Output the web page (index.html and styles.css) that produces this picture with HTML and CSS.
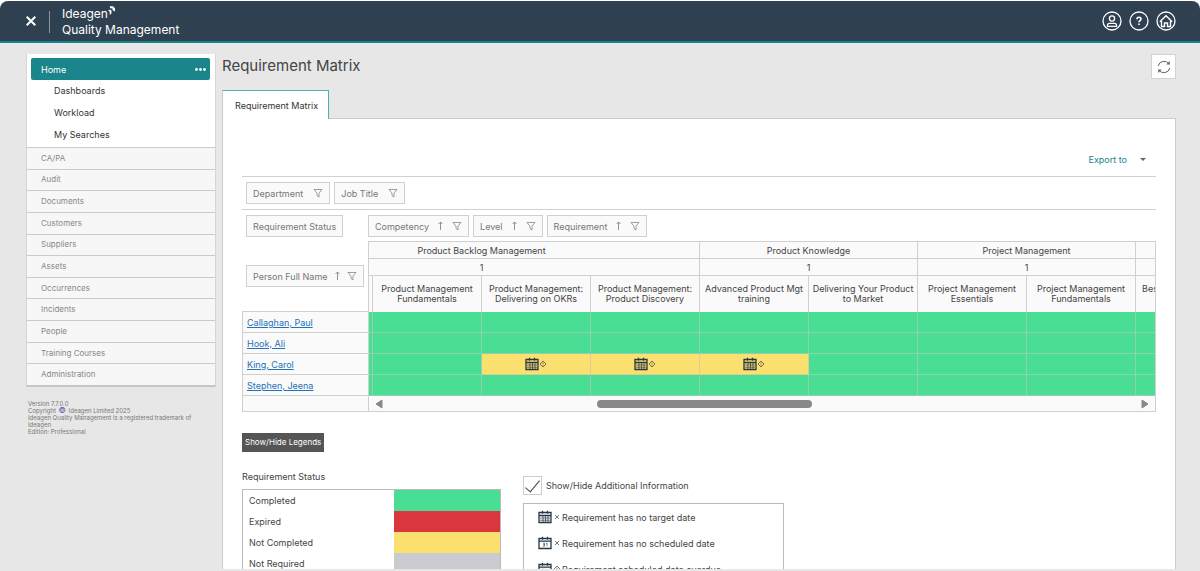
FILE: index.html
```
<!DOCTYPE html>
<html lang="en">

<head>
    <meta charset="UTF-8">
    <meta name="viewport" content="width=device-width, initial-scale=1.0">
    <title>Requirement Matrix</title>
    <link rel="stylesheet" href="styles.css">
</head>

<body>
    <!-- Shared icons -->
    <svg class="sprite" aria-hidden="true">
        <symbol id="filter" viewBox="0 0 10 10">
            <path d="M1 1.5h8L6 5.2V9L4 7.6V5.2z" fill="none" stroke="currentColor" stroke-width="0.7" />
        </symbol>
        <symbol id="sort" viewBox="0 0 8 10">
            <path d="M4 9V1M2 3l2-2 2 2" fill="none" stroke="currentColor" stroke-width="0.8" />
        </symbol>
        <symbol id="calendar" viewBox="0 0 14 14">
            <path d="M1 2.500h12v10H1zM1 5.500h12M4.500 0.800v3M9.500 0.800v3" fill="none" stroke="currentColor" stroke-width="1.300" />
            <path d="M2 8h10M2 10.200h10M5 6v6M7.500 6v6M10 6v6" fill="none" stroke="currentColor" stroke-width="0.700" />
        </symbol>
        <symbol id="calendar-day" viewBox="0 0 14 14">
            <path d="M1 2.500h12v10H1zM1 5.200h12M4.500 0.800v3M9.500 0.800v3" fill="none" stroke="currentColor" stroke-width="1.300" />
            <path d="M4.800 7.200h1.700v3H4.800M5 8.700h1.500M8 7.600l1-.5v3.200" fill="none" stroke="currentColor" stroke-width="0.600" />
        </symbol>
        <symbol id="overdue" viewBox="0 0 8 8">
            <path d="M4 1l3 3-3 3-3-3z" fill="none" stroke="currentColor" stroke-width="0.8" />
            <path d="M4 2.6v1.8M4 5v.6" stroke="currentColor" stroke-width="0.8" />
        </symbol>
        <symbol id="missing" viewBox="0 0 8 8">
            <path d="M2 2l4 4M6 2L2 6" stroke="currentColor" stroke-width="0.8" />
        </symbol>
    </svg>

    <header class="topbar">
        <button class="close-button" type="button" aria-label="Close menu">
            <svg viewBox="0 0 10 10"><path d="M.7.7l8.600 8.600M9.300.7L.7 9.300" stroke="currentColor" stroke-width="2" /></svg>
        </button>
        <div class="brand">
            <div class="brand-name">Ideagen
                <svg class="brand-mark" viewBox="0 0 8 10">
                    <path d="M2 0h3.500L8 2.500V6L5.200 4.800V2.800L2.500 2.300zM0 4.500L2.800 4l1.200 1.200V8L2 10V6.500z" fill="currentColor" />
                </svg>
            </div>
            <div>Quality Management</div>
        </div>
        <nav class="top-links">
            <a href="#" aria-label="Profile">
                <svg viewBox="0 0 20 20" fill="none" stroke="currentColor" stroke-width="1.300">
                    <circle cx="10" cy="10" r="9" />
                    <circle cx="10" cy="7.500" r="2.600" />
                    <path d="M5.500 15.300v-1q0-2 2-2h5q2 0 2 2v1z" />
                </svg>
            </a>
            <a href="#" aria-label="Help">
                <svg viewBox="0 0 20 20" fill="none" stroke="currentColor" stroke-width="1.300">
                    <circle cx="10" cy="10" r="9" />
                    <path d="M8 8.200q0-2 2-2t2 1.800q0 1-1 1.700t-1 1.500M10 12.500v1.600" stroke-width="1.600" />
                </svg>
            </a>
            <a href="#" aria-label="Home">
                <svg viewBox="0 0 20 20" fill="none" stroke="currentColor" stroke-width="1.300">
                    <circle cx="10" cy="10" r="9" />
                    <path d="M3.800 10.800L10 4.800l6.200 6M5.500 10v5.500h3v-3.500h3v3.500h3V10" stroke-width="1.400" />
                </svg>
            </a>
        </nav>
    </header>

    <div class="layout">
        <aside class="sidebar">
            <nav class="menu">
                <div class="menu-open">
                    <a class="menu-active" href="#">Home
                        <svg viewBox="0 0 11 3" fill="currentColor">
                            <circle cx="1.500" cy="1.500" r="1.400" />
                            <circle cx="5.500" cy="1.500" r="1.400" />
                            <circle cx="9.500" cy="1.500" r="1.400" />
                        </svg>
                    </a>
                    <a class="menu-sub" href="#">Dashboards</a>
                    <a class="menu-sub" href="#">Workload</a>
                    <a class="menu-sub" href="#">My Searches</a>
                </div>
                <div class="menu-list">
                    <a class="menu-item" href="#">CA/PA</a>
                    <a class="menu-item" href="#">Audit</a>
                    <a class="menu-item" href="#">Documents</a>
                    <a class="menu-item" href="#">Customers</a>
                    <a class="menu-item" href="#">Suppliers</a>
                    <a class="menu-item" href="#">Assets</a>
                    <a class="menu-item" href="#">Occurrences</a>
                    <a class="menu-item" href="#">Incidents</a>
                    <a class="menu-item" href="#">People</a>
                    <a class="menu-item" href="#">Training Courses</a>
                    <a class="menu-item" href="#">Administration</a>
                </div>
            </nav>
            <div class="version">
                Version 7.7.0.0<br>
                Copyright <span class="copy">©</span> Ideagen Limited 2025<br>
                Ideagen Quality Management is a registered trademark of Ideagen<br>
                Edition: Professional
            </div>
        </aside>

        <main class="content">
            <div class="title-row">
                <h1>Requirement Matrix</h1>
                <button class="refresh-button" type="button" aria-label="Refresh">
                    <svg viewBox="0 0 14 14" fill="none" stroke="currentColor" stroke-width="1">
                        <path d="M1.200 6A6 6 0 0 1 12.200 4.200M12.800 8A6 6 0 0 1 1.800 9.800" />
                        <path d="M12.800 1v3.600H9.200zM1.200 13V9.400h3.600z" fill="currentColor" stroke="none" />
                    </svg>
                </button>
            </div>
            <div class="tabs">
                <a class="tab" href="#">Requirement Matrix</a>
            </div>

            <section class="panel">
                <div class="export-row">
                    <button class="export-button" type="button">Export to <span class="caret"></span></button>
                </div>

                <div class="filter-fields">
                    <button class="field" type="button">Department <svg class="filter"><use href="#filter" /></svg></button>
                    <button class="field" type="button">Job Title <svg class="filter"><use href="#filter" /></svg></button>
                </div>

                <div class="pivot">
                    <div class="data-fields">
                        <button class="field" type="button">Requirement Status</button>
                    </div>
                    <div class="column-fields">
                        <button class="field" type="button">Competency <svg class="sort"><use href="#sort" /></svg><svg class="filter"><use href="#filter" /></svg></button>
                        <button class="field" type="button">Level <svg class="sort"><use href="#sort" /></svg><svg class="filter"><use href="#filter" /></svg></button>
                        <button class="field" type="button">Requirement <svg class="sort"><use href="#sort" /></svg><svg class="filter"><use href="#filter" /></svg></button>
                    </div>

                    <div class="row-side">
                        <div class="row-fields">
                            <button class="field" type="button">Person Full Name <svg class="sort"><use href="#sort" /></svg><svg class="filter"><use href="#filter" /></svg></button>
                        </div>
                        <ul class="people">
                            <li><a href="#">Callaghan, Paul</a></li>
                            <li><a href="#">Hook, Ali</a></li>
                            <li><a href="#">King, Carol</a></li>
                            <li><a href="#">Stephen, Jeena</a></li>
                            <li class="people-end"></li>
                        </ul>
                    </div>

                    <div class="data-side">
                        <div class="viewport">
                            <table class="matrix">
                                <thead>
                                    <tr class="group">
                                        <th colspan="4">Product Backlog Management</th>
                                        <th colspan="2">Product Knowledge</th>
                                        <th colspan="2">Project Management</th>
                                        <th></th>
                                    </tr>
                                    <tr class="group">
                                        <th colspan="4">1</th>
                                        <th colspan="2">1</th>
                                        <th colspan="2">1</th>
                                        <th></th>
                                    </tr>
                                    <tr class="names">
                                        <th></th>
                                        <th>Product Management Fundamentals</th>
                                        <th>Product Management: Delivering on OKRs</th>
                                        <th>Product Management: Product Discovery</th>
                                        <th>Advanced Product Mgt training</th>
                                        <th>Delivering Your Product to Market</th>
                                        <th>Project Management Essentials</th>
                                        <th>Project Management Fundamentals</th>
                                        <th class="cut">Bes</th>
                                    </tr>
                                </thead>
                                <tbody>
                                    <tr><td></td><td></td><td></td><td></td><td></td><td></td><td></td><td></td><td></td></tr>
                                    <tr><td></td><td></td><td></td><td></td><td></td><td></td><td></td><td></td><td></td></tr>
                                    <tr>
                                        <td></td>
                                        <td></td>
                                        <td class="pending"><svg class="calendar"><use href="#calendar" /></svg><svg class="mark"><use href="#overdue" /></svg></td>
                                        <td class="pending"><svg class="calendar"><use href="#calendar" /></svg><svg class="mark"><use href="#overdue" /></svg></td>
                                        <td class="pending"><svg class="calendar"><use href="#calendar" /></svg><svg class="mark"><use href="#overdue" /></svg></td>
                                        <td></td>
                                        <td></td>
                                        <td></td>
                                        <td></td>
                                    </tr>
                                    <tr><td></td><td></td><td></td><td></td><td></td><td></td><td></td><td></td><td></td></tr>
                                </tbody>
                            </table>
                        </div>
                        <div class="scrollbar">
                            <svg viewBox="0 0 8 10"><path d="M7 1v8L1 5z" fill="currentColor" stroke="currentColor" stroke-linejoin="round" /></svg>
                            <div class="track"><div class="thumb"></div></div>
                            <svg viewBox="0 0 8 10"><path d="M1 1v8l6-4z" fill="currentColor" stroke="currentColor" stroke-linejoin="round" /></svg>
                        </div>
                    </div>
                </div>

                <button class="legend-button" type="button">Show/Hide Legends</button>

                <div class="legends">
                    <div class="status-legend">
                        <h2>Requirement Status</h2>
                        <table>
                            <tr><td>Completed</td><td class="completed"></td></tr>
                            <tr><td>Expired</td><td class="expired"></td></tr>
                            <tr><td>Not Completed</td><td class="not-completed"></td></tr>
                            <tr><td>Not Required</td><td class="not-required"></td></tr>
                        </table>
                    </div>
                    <div class="info-legend">
                        <label class="info-toggle"><input type="checkbox" checked> Show/Hide Additional Information</label>
                        <ul>
                            <li><svg class="calendar"><use href="#calendar" /></svg><svg class="mark"><use href="#missing" /></svg>Requirement has no target date</li>
                            <li><svg class="calendar"><use href="#calendar-day" /></svg><svg class="mark"><use href="#missing" /></svg>Requirement has no scheduled date</li>
                            <li><svg class="calendar"><use href="#calendar-day" /></svg><svg class="mark"><use href="#overdue" /></svg>Requirement scheduled date overdue</li>
                        </ul>
                    </div>
                </div>
            </section>
        </main>
    </div>
</body>

</html>
```
FILE: styles.css
```
* {
    box-sizing: border-box;
}

body {
    display: flex;
    flex-direction: column;
    height: 100vh;
    margin: 0;
    padding-top: 1px;
    overflow: hidden;
    background: #fff;
    color: #444;
    font-family: Inter, "Liberation Sans", sans-serif;
    font-size: 9px;
    line-height: 11px;
}

a {
    color: inherit;
    text-decoration: none;
}

button {
    padding: 0;
    border: 0;
    background: none;
    color: inherit;
    font: inherit;
    cursor: pointer;
}

ul {
    margin: 0;
    padding: 0;
    list-style: none;
}

svg {
    display: block;
    flex: none;
}

.sprite {
    position: absolute;
    width: 0;
    height: 0;
}

/* Header */
.topbar {
    display: flex;
    flex: none;
    align-items: center;
    height: 42px;
    padding: 0 24px;
    border-bottom: 2px solid #16858b;
    border-radius: 8px 8px 0 0;
    background: #2f4151;
    color: #fff;
}

.close-button {
    width: 26px;
    padding-left: 2px;
}

.close-button svg {
    width: 10px;
    height: 10px;
}

.brand {
    position: relative;
    padding-top: 1px;
    padding-left: 12px;
    font-size: 12px;
    line-height: 16px;
}

.brand::before {
    content: "";
    position: absolute;
    top: 6px;
    bottom: 5px;
    left: -1px;
    border-left: 1px solid #8b96a0;
}

.brand-name {
    display: flex;
    align-items: flex-start;
}

.brand-mark {
    width: 7px;
    height: 9px;
}

.top-links {
    display: flex;
    gap: 7px;
    margin-left: auto;
}

.top-links svg {
    width: 20px;
    height: 20px;
}

/* Page */
.layout {
    display: flex;
    flex: 1;
    align-items: flex-start;
    gap: 6px;
    min-height: 0;
    padding: 11px 24px 0 26px;
    overflow: hidden;
    border-bottom: 2px solid #e7e7e7;
    background: #e7e7e7;
}

.sidebar {
    flex: none;
    width: 190px;
}

.menu {
    border: 1px solid #d4d7d9;
    border-top: 0;
    border-bottom: 2px solid #c3c7ca;
    background: #f7f7f7;
}

.menu-open {
    padding: 4px 5px 1px 4px;
    background: #fff;
    color: #333;
}

.menu-active {
    display: flex;
    align-items: center;
    justify-content: space-between;
    height: 22px;
    padding: 0 4px 0 10px;
    border-radius: 2px;
    background: #1a858b;
    color: #fff;
}

.menu-active svg {
    width: 11px;
    height: 3px;
}

.menu-sub {
    display: block;
    padding-left: 23px;
    line-height: 22px;
}

.menu-list {
    display: flex;
    flex-direction: column;
    height: 238px;
}

.menu-item {
    display: flex;
    flex: 1;
    align-items: center;
    padding-left: 14px;
    border-top: 1px solid #c9cccf;
    color: #888;
    font-size: 8px;
}

.version {
    padding: 13px 10px 0 2px;
    color: #777;
    font-size: 6px;
    line-height: 7px;
}

.copy {
    margin: 0 1px;
    color: #5358a8;
    font-size: 8px;
}

.content {
    display: flex;
    flex: 1;
    flex-direction: column;
    min-width: 0;
}

.title-row {
    display: flex;
    align-items: flex-start;
    justify-content: space-between;
    height: 36px;
}

h1 {
    margin: 0;
    font-size: 15px;
    font-weight: 400;
    line-height: 24px;
}

.refresh-button {
    display: grid;
    place-items: center;
    width: 25px;
    height: 25px;
    border: 1px solid #d3d3d3;
    background: #fff;
    color: #666;
}

.refresh-button svg {
    width: 14px;
    height: 14px;
}

.tabs {
    display: flex;
}

.tab {
    position: relative;
    z-index: 1;
    height: 29px;
    margin-bottom: -1px;
    padding: 0 10px 0 12px;
    border: 1px solid #4fb0b0;
    border-bottom: 0;
    border-left-color: #c5cccf;
    background: #fff;
    color: #333;
    line-height: 29px;
}

.panel {
    padding: 31px 19px 20px;
    border: 1px solid #c9cdd0;
    background: #fff;
}

.export-row {
    display: flex;
    justify-content: flex-end;
    padding: 0 10px 8px;
}

.export-button {
    display: flex;
    align-items: center;
    gap: 13px;
    height: 18px;
    color: #16858b;
}

.caret {
    border: 3px solid transparent;
    border-top-color: #666;
    border-bottom: 0;
}

/* Field chips */
.field {
    display: flex;
    align-items: center;
    gap: 7px;
    height: 22px;
    padding: 0 6px;
    border: 1px solid #d0d0d0;
    background: #fafafa;
    color: #777;
    white-space: nowrap;
}

.filter {
    width: 10px;
    height: 10px;
}

.sort {
    width: 9px;
    height: 10px;
}

.filter-fields {
    display: flex;
    gap: 4px;
    padding: 5px 4px;
    border-top: 1px solid #d0d0d0;
    border-bottom: 1px solid #d0d0d0;
}

.filter-fields .field {
    gap: 10px;
}

/* Pivot */
.pivot {
    display: grid;
    grid-template-columns: 126px minmax(0, 1fr);
}

.data-fields,
.column-fields {
    display: flex;
    gap: 4px;
    padding: 5px 0 4px;
}

.data-fields {
    padding-left: 4px;
}

.row-fields {
    display: flex;
    align-items: center;
    height: 70px;
    padding-left: 4px;
}

.row-fields .field {
    gap: 5px;
}

.people {
    border: 1px solid #d0d0d0;
    border-right: 0;
    background: #fafafa;
}

.people li {
    height: 21px;
    padding-left: 4px;
    border-bottom: 1px solid #d0d0d0;
    line-height: 21px;
}

.people .people-end {
    height: 15px;
    border-bottom: 0;
}

.people a {
    color: #2372b9;
    text-decoration: underline;
}

.data-side {
    min-width: 0;
    border: 1px solid #d0d0d0;
    background: #fafafa;
}

.viewport {
    overflow: hidden;
}

/* scrolled past most of the first column */
.matrix {
    width: 981px;
    margin-left: -105px;
    border-collapse: separate;
    border-spacing: 0;
    table-layout: fixed;
}

.matrix th,
.matrix td {
    padding: 0;
    border-right: 1px solid #d0d0d0;
    border-bottom: 1px solid #d0d0d0;
    font-weight: 400;
}

.matrix .group {
    height: 17px;
}

.matrix .names {
    height: 36px;
}

.matrix .names th {
    padding: 0 3px;
    border-bottom: 0;
    line-height: 10px;
}

.matrix .names .cut {
    padding: 8px 6px;
    text-align: left;
    vertical-align: top;
}

.matrix tbody tr {
    height: 21px;
}

.matrix td {
    border-color: #8fd3ae;
    background: #4ade94;
    text-align: center;
}

.matrix .pending {
    border-color: #d9cf94;
    background: #fbe06f;
}

.calendar {
    width: 14px;
    height: 14px;
    color: #263746;
}

.mark {
    width: 8px;
    height: 8px;
    color: #555;
}

.pending svg {
    display: inline-block;
    vertical-align: middle;
}

.scrollbar {
    display: flex;
    align-items: center;
    gap: 4px;
    height: 15px;
    padding: 0 6px;
    color: #888;
}

.scrollbar svg {
    width: 8px;
    height: 10px;
}

.track {
    flex: 1;
}

.thumb {
    width: 215px;
    height: 8px;
    margin-left: 28%;
    border-radius: 4px;
    background: #888;
}

/* Legends */
.legend-button {
    height: 19px;
    margin-top: 21px;
    padding: 0 3px;
    background: #555;
    color: #fff;
    font-size: 8px;
}

.legends {
    display: flex;
    gap: 22px;
    margin-top: 18px;
}

.status-legend {
    width: 259px;
}

h2 {
    margin: 0;
    font-size: 9px;
    font-weight: 400;
    line-height: 13px;
}

.status-legend table {
    width: 100%;
    margin-top: 6px;
    border: 1px solid #bbb;
    border-spacing: 0;
}

.status-legend td {
    height: 21px;
    padding: 0 0 0 6px;
}

.status-legend .completed,
.status-legend .expired,
.status-legend .not-completed,
.status-legend .not-required {
    width: 106px;
}

.completed {
    background: #4ade94;
}

.expired {
    background: #d9363e;
}

.not-completed {
    background: #fbe06f;
}

.not-required {
    background: #c9cbd1;
}

.info-legend {
    width: 261px;
    margin-top: 6px;
}

.info-toggle {
    display: flex;
    align-items: center;
    gap: 4px;
}

.info-toggle input {
    appearance: none;
    display: grid;
    place-items: center;
    width: 19px;
    height: 19px;
    margin: 0;
    border: 1px solid #ccc;
    background: #fff;
}

.info-toggle input:checked::before {
    content: "";
    width: 6px;
    height: 14px;
    margin-bottom: 3px;
    border: solid #444;
    border-width: 0 1px 1px 0;
    transform: rotate(40deg);
}

.info-legend ul {
    margin-top: 8px;
    border: 1px solid #bbb;
}

.info-legend li {
    display: flex;
    align-items: center;
    height: 26px;
    padding-left: 14px;
}

.info-legend .mark {
    margin: 0 1px;
}
```
